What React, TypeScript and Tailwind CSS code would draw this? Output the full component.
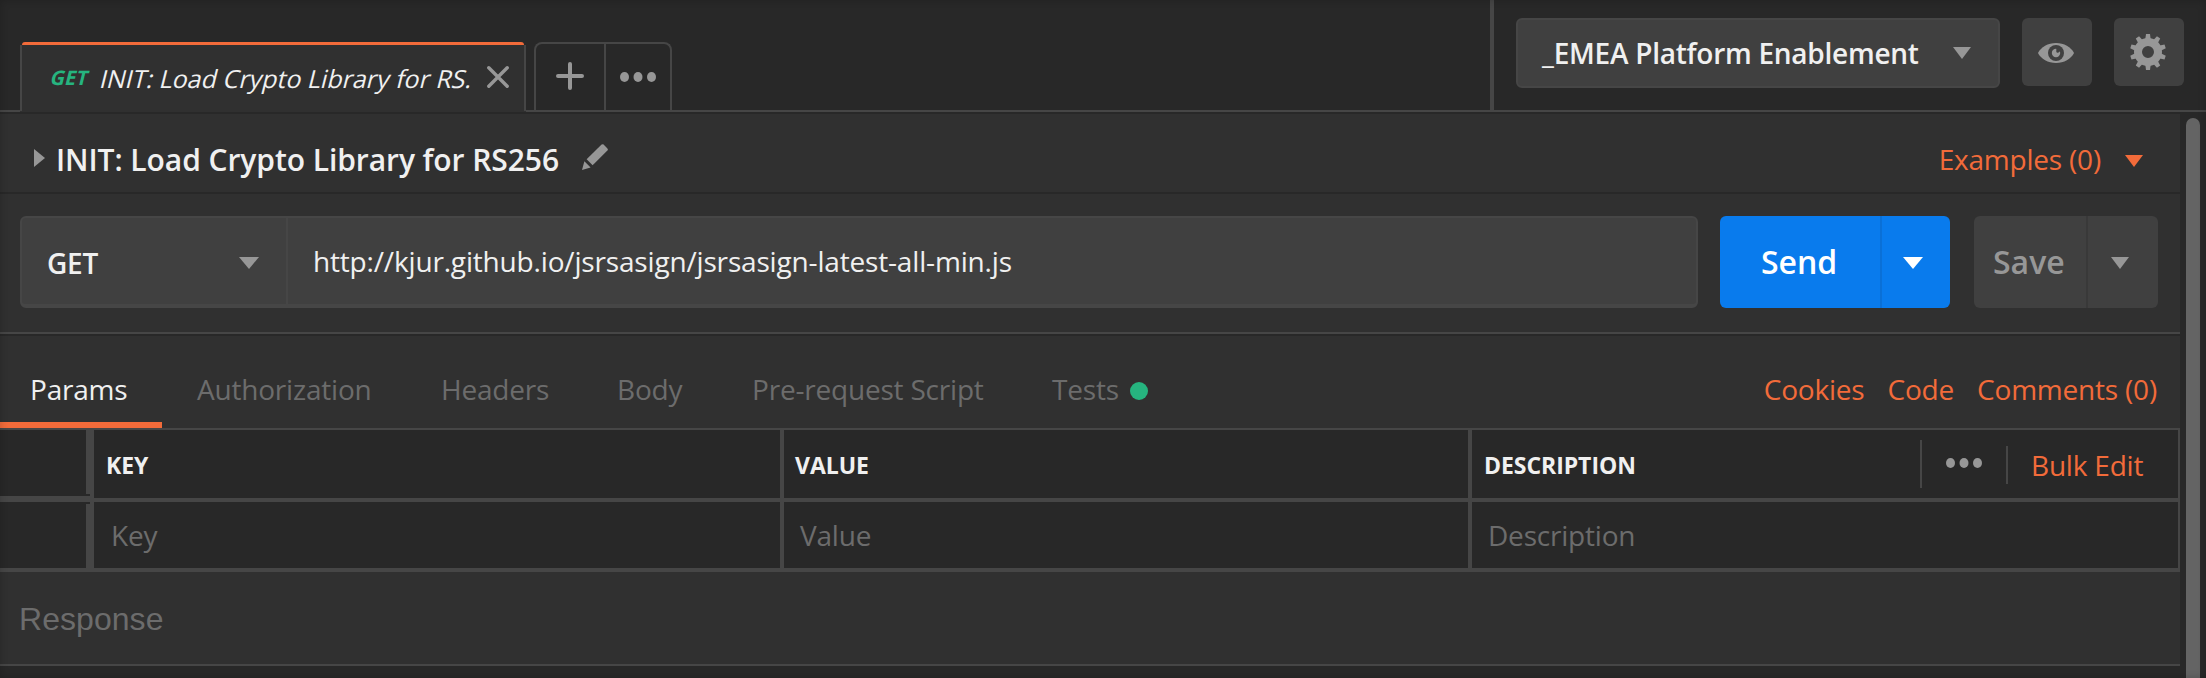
import React from "react";

type CaretProps = { w: number; h: number; className?: string };

function Caret({ w, h, className = "" }: CaretProps) {
  return (
    <svg width={w} height={h} viewBox="0 0 20 12" preserveAspectRatio="none" className={`shrink-0 ${className}`}>
      <path d="M0 0H20L10 12Z" fill="currentColor" />
    </svg>
  );
}

function Dots({ className = "" }: { className?: string }) {
  return (
    <svg width="36" height="10" viewBox="0 0 36 10" className={`shrink-0 ${className}`}>
      <ellipse cx="4.5" cy="5" rx="4.5" ry="5" fill="currentColor" />
      <ellipse cx="18" cy="5" rx="4.5" ry="5" fill="currentColor" />
      <ellipse cx="31.5" cy="5" rx="4.5" ry="5" fill="currentColor" />
    </svg>
  );
}

function Gear() {
  const teeth = [0, 36, 72, 108, 144, 180, 216, 252, 288, 324];
  return (
    <svg width="36" height="36" viewBox="0 0 36 36" className="mr-0.5 text-[#979797]">
      {teeth.map((a) => (
        <path key={a} d="M15.2 6L16 0H20L20.8 6Z" fill="currentColor" transform={`rotate(${a} 18 18)`} />
      ))}
      <circle cx="18" cy="18" r="10" fill="none" stroke="currentColor" strokeWidth="8" />
    </svg>
  );
}

function Eye() {
  return (
    <svg width="36" height="20" viewBox="0 0 36 20" className="mr-0.5 mt-0.5">
      <path d="M0 10C3 4 10 0 18 0S33 4 36 10C33 16 26 20 18 20S3 16 0 10Z" fill="#979797" />
      <circle cx="18" cy="10" r="8" fill="#404040" />
      <circle cx="18" cy="10" r="4.2" fill="#979797" />
      <path d="M18.3 4.5V8.2A1.6 1.6 0 0 0 20.5 9.5L23 7.5Z" fill="#404040" />
    </svg>
  );
}

function TopBar() {
  return (
    <div className="flex h-[112px] bg-[#282828]">
      <div className="w-5 border-b-2 border-[#464646]" />
      <div className="flex h-[112px] w-[506px] flex-col pt-[42px]">
        <div className="mx-0.5 h-1 rounded-t-md bg-[#f26b3a]" />
        <div className="flex h-[66px] items-center border-x-2 border-[#464646] bg-[#303030] pl-[29px]">
          <span className="w-[50px] shrink-0 -skew-x-[14deg] text-[20px] font-bold leading-[66px] text-[#26b47f]">GET</span>
          <span className="w-[371px] shrink-0 -skew-x-[14deg] overflow-hidden whitespace-nowrap text-[25px] leading-[66px] tracking-[0.02px] text-[#f0f0f0]">
            INIT: Load Crypto Library for RS.
          </span>
          <svg width="22" height="22" viewBox="0 0 22 22" className="-mt-0.5 ml-[15px] shrink-0">
            <path d="M1.8 1.8L20.2 20.2M20.2 1.8L1.8 20.2" stroke="#979797" strokeWidth="3.4" strokeLinecap="round" />
          </svg>
        </div>
        <div className="h-0.5 bg-[#303030]" />
      </div>
      <div className="w-2 border-b-2 border-[#464646]" />
      <div className="flex h-[112px] w-[138px] border-b-2 border-[#464646] pt-[42px]">
        <div className="flex h-[68px] w-[138px] rounded-t-lg border-x-2 border-t-2 border-[#464646] text-[#979797]">
          <div className="flex w-[70px] items-center justify-center border-r-2 border-[#464646]">
            <svg width="28" height="28" viewBox="0 0 28 28" className="-mt-0.5">
              <path d="M14 2V26M2 14H26" stroke="currentColor" strokeWidth="4" strokeLinecap="round" />
            </svg>
          </div>
          <div className="flex flex-1 items-center justify-center">
            <Dots />
          </div>
        </div>
      </div>
      <div className="flex-1 border-b-2 border-[#464646]" />
      <div className="flex w-[716px] items-start border-b-2 border-l-4 border-[#464646] pl-[22px] pt-[18px]">
        <div className="flex h-[70px] w-[484px] items-center rounded-md border-2 border-[#464646] bg-[#404040] pl-6">
          <span className="w-[411px] whitespace-nowrap text-[28px] font-semibold tracking-[-0.26px] text-[#f0f0f0]">
            _EMEA Platform Enablement
          </span>
          <Caret w={18} h={12} className="text-[#979797]" />
        </div>
        <div className="ml-[22px] flex h-[68px] w-[70px] items-center justify-center rounded-md bg-[#404040]">
          <Eye />
        </div>
        <div className="ml-[22px] flex h-[68px] w-[70px] items-center justify-center rounded-md bg-[#404040]">
          <Gear />
        </div>
      </div>
    </div>
  );
}

function TitleRow() {
  return (
    <div className="flex h-[82px] items-center border-y-2 border-[#282828] pl-[34px] pr-[37px]">
      <svg width="11" height="18" viewBox="0 0 11 18" className="mt-2.5 shrink-0">
        <path d="M0 0L11 9L0 18Z" fill="#979797" />
      </svg>
      <span className="ml-[11px] mt-3.5 w-[526px] whitespace-nowrap text-[30px] font-semibold leading-[38px] tracking-[-0.07px] text-[#f0f0f0]">
        INIT: Load Crypto Library for RS256
      </span>
      <svg width="26" height="26" viewBox="0 0 26 26" className="mt-2 shrink-0">
        <path d="M19.6 0.6Q20.6 -0.3 21.6 0.6L25.4 4.4Q26.3 5.4 25.4 6.4L10.6 21.3L4.6 15.3Z" fill="#979797" />
        <path d="M2.4 17.3L8.6 23.5L0 26Z" fill="#979797" />
      </svg>
      <span className="ml-auto mt-3 text-[28px] leading-[38px] tracking-[-0.2px] text-[#f26b3a]">Examples (0)</span>
      <Caret w={18} h={12} className="ml-6 mt-4 text-[#f26b3a]" />
    </div>
  );
}

function RequestRow() {
  return (
    <div className="flex h-[140px] border-b-2 border-[#464646] pl-5 pt-[22px]">
      <div className="flex h-[92px] w-[1678px] rounded-md border-2 border-b-4 border-[#464646] bg-[#404040]">
        <div className="flex w-[266px] items-center border-r-2 border-[#464646] pl-[25px]">
          <span className="mt-1 w-[192px] text-[28px] font-semibold tracking-[-0.2px] text-[#f0f0f0]">GET</span>
          <Caret w={20} h={12} className="mt-1 text-[#979797]" />
        </div>
        <span className="pl-[25px] text-[28px] leading-[86px] tracking-[-0.17px] text-[#f0f0f0]">
          http://kjur.github.io/jsrsasign/jsrsasign-latest-all-min.js
        </span>
      </div>
      <div className="ml-[22px] flex h-[92px] w-[230px] overflow-hidden rounded-md bg-[#097bed] text-white">
        <div className="w-[162px] border-r-2 border-[#0a70d7] pl-[41px] text-[32px] font-semibold leading-[92px]">Send</div>
        <div className="flex flex-1 items-center justify-center pr-1.5">
          <Caret w={20} h={12} className="mt-0.5" />
        </div>
      </div>
      <div className="ml-6 flex h-[92px] w-[184px] rounded-md bg-[#404040] text-[#979797]">
        <div className="w-[114px] border-r-2 border-[#393939] pl-[19px] text-[32px] font-semibold leading-[92px]">Save</div>
        <div className="flex flex-1 items-center justify-center pr-1.5">
          <Caret w={18} h={12} className="mt-0.5" />
        </div>
      </div>
    </div>
  );
}

function TabsRow() {
  return (
    <div className="flex h-24 whitespace-nowrap border-b-2 border-t-2 border-b-[#464646] border-t-[#282828] text-[28px] leading-[107px] tracking-[-0.2px] text-[#6c6c6c]">
      <div className="w-[162px] border-b-[6px] border-[#f26b3a] pl-[30px] text-[#f0f0f0]">Params</div>
      <div className="ml-[35px] w-[244px]">Authorization</div>
      <div className="w-[176px]">Headers</div>
      <div className="w-[135px]">Body</div>
      <div className="w-[300px]">Pre-request Script</div>
      <div className="w-[78px]">Tests</div>
      <div className="mt-[46px] h-[18px] w-[18px] rounded-full bg-[#26b47f]" />
      <div className="ml-auto flex gap-[23px] pr-[23px] text-[#f26b3a]">
        <span>Cookies</span>
        <span>Code</span>
        <span>Comments (0)</span>
      </div>
    </div>
  );
}

function ParamsTable() {
  return (
    <div className="h-[142px] border-r-2 border-[#464646] bg-[#282828]">
      <div className="flex h-[68px] text-[23px] font-bold leading-[70px] tracking-[-0.05px] text-[#f0f0f0]">
        <div className="flex h-[72px] w-[90px] flex-col">
          <div className="h-16 border-r-4 border-[#464646]" />
          <div className="mt-0.5 h-1.5 bg-[#464646]" />
        </div>
        <div className="w-[694px] border-x-4 border-[#464646] pl-[12px]">KEY</div>
        <div className="w-[688px] border-r-4 border-[#464646] pl-[11px]">VALUE</div>
        <div className="flex flex-1 pl-[12px]">
          <span className="w-[436px]">DESCRIPTION</span>
          <div className="mt-2.5 h-12 w-[62px] border-l-2 border-[#464646] pl-6 pt-[18px]">
            <Dots className="text-[#979797]" />
          </div>
          <div className="ml-6 mt-4 h-[38px] w-0.5 bg-[#464646]" />
          <span className="ml-[23px] whitespace-nowrap text-[28px] font-normal leading-[71px] tracking-[-0.2px] text-[#f26b3a]">
            Bulk Edit
          </span>
        </div>
      </div>
      <div className="flex">
        <div className="w-[90px] shrink-0" />
        <div className="h-1 flex-1 bg-[#464646]" />
      </div>
      <div className="flex h-[66px] text-[28px] leading-[67px] tracking-[-0.2px] text-[#6c6c6c]">
        <div className="flex w-[90px] pt-0.5">
          <div className="flex-1 border-r-4 border-[#464646]" />
        </div>
        <div className="w-[694px] border-x-4 border-[#464646] pl-[17px]">Key</div>
        <div className="w-[688px] border-r-4 border-[#464646] pl-[16px]">Value</div>
        <div className="pl-[16px]">Description</div>
      </div>
      <div className="h-1 bg-[#464646]" />
    </div>
  );
}

export default function App() {
  return (
    <div className="relative h-[678px] w-[2206px] overflow-hidden bg-[#282828] font-['Open_Sans','Noto_Sans',sans-serif]">
      <TopBar />
      <div className="flex">
        <div className="w-[2180px] bg-[#303030]">
          <TitleRow />
          <RequestRow />
          <TabsRow />
          <ParamsTable />
          <div className="h-[94px] border-b-2 border-[#464646] pl-[19px] font-['Liberation_Sans',Arial,sans-serif] text-[32px] leading-[94px] tracking-[0.05px] text-[#6c6c6c]">
            Response
          </div>
          <div className="h-3 bg-[#282828]" />
        </div>
        <div className="h-[566px] w-[26px] pl-1.5 pt-1.5">
          <div className="h-[580px] w-[14px] rounded-full bg-[#646464]" />
        </div>
      </div>
      <div className="pointer-events-none absolute inset-0 shadow-[inset_0_0_8px_rgba(0,0,0,0.2)]" />
    </div>
  );
}
